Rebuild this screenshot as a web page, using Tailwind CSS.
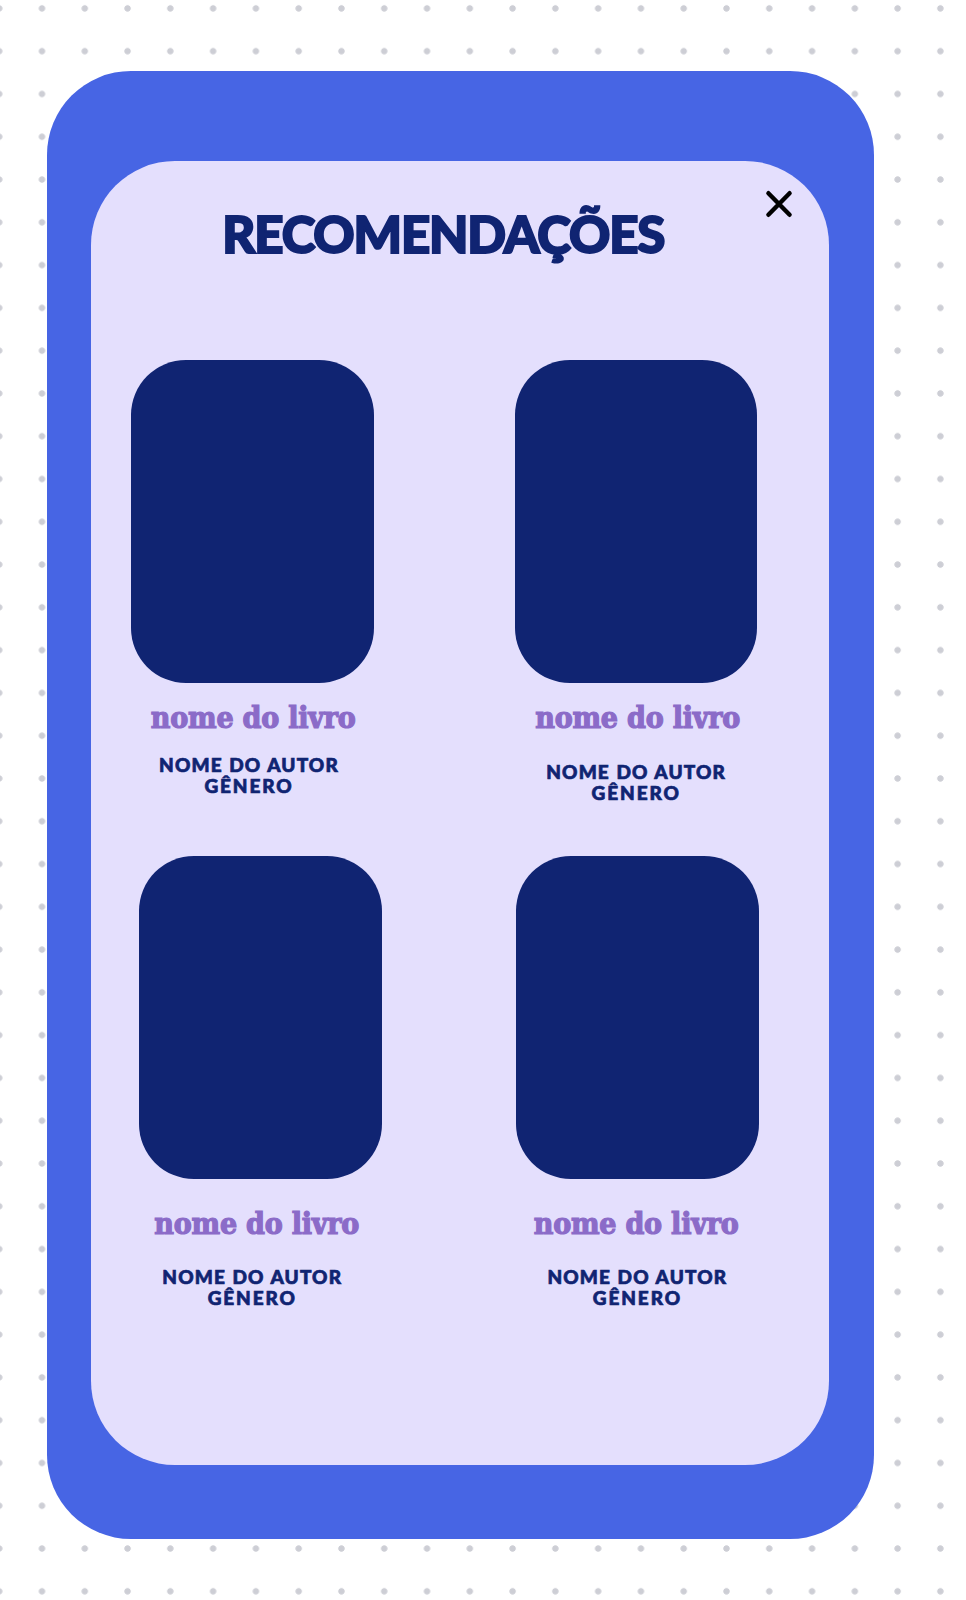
<!DOCTYPE html>
<html lang="pt-BR">
<head>
<meta charset="utf-8">
<meta name="viewport" content="width=device-width, initial-scale=1">
<title>Recomendações</title>
<script src="https://cdn.jsdelivr.net/npm/@tailwindcss/browser@4"></script>
</head>
<body class="h-[1600px] w-[966px] overflow-hidden bg-white bg-[radial-gradient(circle,#cdced5_2.8px,transparent_3.6px)] bg-[length:42.79px_42.79px] bg-[position:20.6px_29.8px] pt-[71.4px] pl-[46.5px] font-['Lato',sans-serif] text-[#102472]">
  <main class="h-[1467.6px] w-[827.5px] rounded-[84px] bg-[#4765e4] px-[44.3px] pt-[89.4px]">
    <section class="relative h-[1304.3px] w-[738.5px] rounded-[84px] bg-[#e4dffd] pt-[43.3px]">
      <button type="button" aria-label="Fechar" class="absolute top-[29.3px] left-[673.9px] size-7">
        <svg class="size-7" viewBox="0 0 28 28" fill="none" stroke="#000" stroke-width="4.4" stroke-linecap="round"><path d="M3.4 3.2 24.6 24.8M24.6 3.2 3.4 24.8"/></svg>
      </button>
      <h1 class="pr-[33.5px] text-center text-[51px] leading-[60px] font-black tracking-[-1.15px] [-webkit-text-stroke:2px_#102472]">RECOMENDAÇÕES</h1>

      <div class="mt-24 flex h-[496px] pl-[40.5px]">
        <article class="w-[242.4px] text-center">
          <div class="h-[323.4px] rounded-[55px] bg-[#102472]"></div>
          <h2 class="mt-[16.3px] pl-[1.5px] font-['DejaVu_Serif_Condensed','DejaVu_Serif',serif] text-[30px] leading-9 font-bold tracking-[-0.2px] text-[#8b6bc8] [-webkit-text-stroke:1.2px_#8b6bc8]">nome do livro</h2>
          <p class="mt-[19.5px] pr-[7px] text-[19px] leading-[20.6px] font-black tracking-[1.15px] [word-spacing:0.8px] [-webkit-text-stroke:0.7px_#102472]">NOME DO AUTOR<br><span class="tracking-[1.9px]">GÊNERO</span></p>
        </article>
        <article class="ml-[141.3px] w-[242.4px] text-center">
          <div class="h-[323.4px] rounded-[55px] bg-[#102472]"></div>
          <h2 class="mt-[16.3px] pl-[3px] font-['DejaVu_Serif_Condensed','DejaVu_Serif',serif] text-[30px] leading-9 font-bold tracking-[-0.2px] text-[#8b6bc8] [-webkit-text-stroke:1.2px_#8b6bc8]">nome do livro</h2>
          <p class="mt-[26.5px] text-[19px] leading-[20.6px] font-black tracking-[1.15px] [word-spacing:0.8px] [-webkit-text-stroke:0.7px_#102472]">NOME DO AUTOR<br><span class="tracking-[1.9px]">GÊNERO</span></p>
        </article>
      </div>

      <div class="flex pl-[48.5px]">
        <article class="w-[242.4px] text-center">
          <div class="h-[323.4px] rounded-[55px] bg-[#102472]"></div>
          <h2 class="mt-[26.1px] pr-[7.5px] font-['DejaVu_Serif_Condensed','DejaVu_Serif',serif] text-[30px] leading-9 font-bold tracking-[-0.2px] text-[#8b6bc8] [-webkit-text-stroke:1.2px_#8b6bc8]">nome do livro</h2>
          <p class="mt-[25.5px] pr-[16.5px] text-[19px] leading-[20.6px] font-black tracking-[1.15px] [word-spacing:0.8px] [-webkit-text-stroke:0.7px_#102472]">NOME DO AUTOR<br><span class="tracking-[1.9px]">GÊNERO</span></p>
        </article>
        <article class="ml-[134.5px] w-[242.4px] text-center">
          <div class="h-[323.4px] rounded-[55px] bg-[#102472]"></div>
          <h2 class="mt-[26.1px] pr-[2.5px] font-['DejaVu_Serif_Condensed','DejaVu_Serif',serif] text-[30px] leading-9 font-bold tracking-[-0.2px] text-[#8b6bc8] [-webkit-text-stroke:1.2px_#8b6bc8]">nome do livro</h2>
          <p class="mt-[25.5px] text-[19px] leading-[20.6px] font-black tracking-[1.15px] [word-spacing:0.8px] [-webkit-text-stroke:0.7px_#102472]">NOME DO AUTOR<br><span class="tracking-[1.9px]">GÊNERO</span></p>
        </article>
      </div>
    </section>
  </main>
</body>
</html>
